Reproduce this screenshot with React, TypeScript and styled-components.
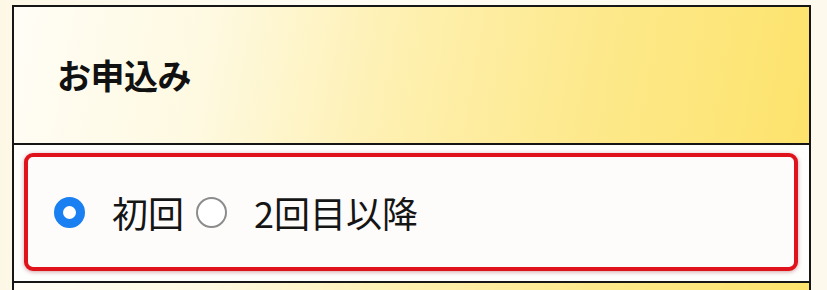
import React, { useState } from 'react';
import styled, { createGlobalStyle } from 'styled-components';

const GlobalStyle = createGlobalStyle`
  html, body {
    margin: 0;
    padding: 0;
    background: #fdf9ea;
    overflow: hidden;
  }
  body {
    font-family: "Noto Sans CJK JP", "Noto Sans", sans-serif;
    color: #111;
  }
`;

const Page = styled.div`
  width: 827px;
  height: 290px;
  padding: 5px 0 0 12px;
  box-sizing: border-box;
  overflow: hidden;
  background: linear-gradient(90deg, #fdf8e6 0%, #fefcf4 40%, #fdf9ec 100%);
`;

const Table = styled.div`
  width: 799px;
  border: 2.5px solid #161616;
  border-bottom: none;
  box-sizing: border-box;
  display: flex;
  flex-direction: column;
`;

const HeaderCell = styled.div<{ $height: number }>`
  height: ${(p) => p.$height}px;
  display: flex;
  align-items: center;
  padding-left: 43px;
  background: linear-gradient(
    100deg,
    #fffdf6 0%,
    #fef9e0 25%,
    #fef0b0 48%,
    #fde98c 72%,
    #fde36c 100%
  );
  border-bottom: 2.5px solid #161616;
`;

const HeaderTitle = styled.h2`
  margin: 0;
  font-size: 34px;
  font-weight: 700;
  letter-spacing: -0.5px;
  color: #111;
  transform: translateY(-1px);
`;

const BodyCell = styled.div`
  background: #fefefd;
  padding: 8px 11px 10px 10px;
  border-bottom: 2.5px solid #161616;
`;

const Highlight = styled.div`
  height: 118px;
  box-sizing: border-box;
  border: 4.5px solid #e0121c;
  border-radius: 9px;
  box-shadow: 0 1px 4px rgba(120, 0, 0, 0.35);
  background: #fdfcfb;
  display: flex;
  align-items: center;
  padding-left: 26px;
  gap: 12px;
`;

const Option = styled.label`
  display: flex;
  align-items: center;
  cursor: pointer;
`;

const Radio = styled.span<{ $checked: boolean }>`
  width: 31px;
  height: 31px;
  border-radius: 50%;
  box-sizing: border-box;
  flex-shrink: 0;
  background: #fff;
  border: ${(p) => (p.$checked ? '9px solid #1a7ff0' : '2px solid #8c8c8c')};
`;

const OptionText = styled.span`
  font-size: 36px;
  font-weight: 400;
  color: #151515;
  margin-left: 27px;
`;

const options = ['初回', '2回目以降'];

export default function App() {
  const [selected, setSelected] = useState(0);

  return (
    <>
      <GlobalStyle />
      <Page>
        <Table>
          <HeaderCell $height={136}>
            <HeaderTitle>お申込み</HeaderTitle>
          </HeaderCell>
          <BodyCell>
            <Highlight>
              {options.map((label, i) => (
                <Option key={label} onClick={() => setSelected(i)}>
                  <Radio $checked={selected === i} />
                  <OptionText>{label}</OptionText>
                </Option>
              ))}
            </Highlight>
          </BodyCell>
          <HeaderCell $height={40} />
        </Table>
      </Page>
    </>
  );
}
